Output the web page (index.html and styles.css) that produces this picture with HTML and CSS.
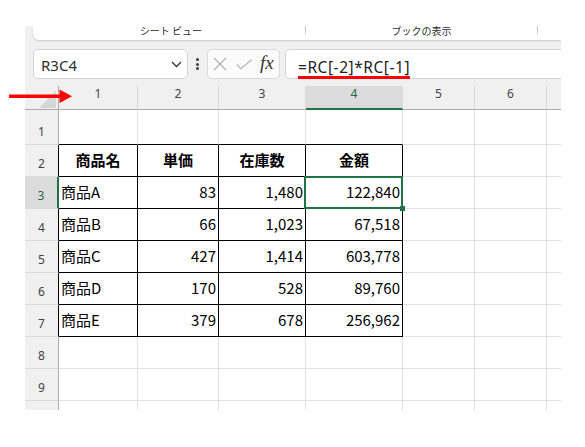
FILE: index.html
```html
<!DOCTYPE html>
<html lang="ja">
<head>
<meta charset="utf-8">
<title>Excel R1C1</title>
<link rel="stylesheet" href="styles.css">
</head>
<body>
<div class="page">
  <div class="window">
    <div class="ribbon">
      <div class="rgroup g1"><span class="rlabel">シート ビュー</span></div>
      <div class="rsep"></div>
      <div class="rgroup g2"><span class="rlabel">ブックの表示</span></div>
      <div class="rsep"></div>
      <div class="rgroup g3"></div>
    </div>
    <div class="fbar">
      <div class="namebox">
        <span class="nametext">R3C4</span>
        <svg class="chev" width="11" height="7" viewBox="0 0 11 7"><polyline points="1,1 5.5,5.5 10,1" fill="none" stroke="#333" stroke-width="1.3"/></svg>
      </div>
      <div class="dots"><i></i><i></i><i></i></div>
      <div class="btnbox">
        <svg class="xicon" width="14" height="14" viewBox="0 0 14 14"><path d="M1 1 L13 13 M13 1 L1 13" stroke="#b3b3b3" stroke-width="1.2" fill="none"/></svg>
        <svg class="chk" width="16" height="11" viewBox="0 0 16 11"><polyline points="0.8,5.5 5,9.8 15.5,0.8" fill="none" stroke="#b3b3b3" stroke-width="1.2"/></svg>
        <span class="fx">fx</span>
      </div>
      <div class="formula"><span class="ftext">=RC[-2]*RC[-1]</span></div>
    </div>
    <div class="sheet">
      <div class="corner"><div class="tri"></div></div>
      <div class="ch">1</div><div class="ch">2</div><div class="ch">3</div><div class="ch chs">4</div><div class="ch">5</div><div class="ch">6</div><div class="ch last"></div>

      <div class="rh">1</div>
      <div class="c tt"></div><div class="c tt"></div><div class="c tt"></div><div class="c tt"></div><div class="c"></div><div class="c"></div><div class="c last"></div>

      <div class="rh rt">2</div>
      <div class="c t hd">商品名</div><div class="c t hd">単価</div><div class="c t hd">在庫数</div><div class="c t hd">金額</div><div class="c"></div><div class="c"></div><div class="c last"></div>

      <div class="rh rhs">3</div>
      <div class="c t">商品A</div><div class="c t num">83</div><div class="c t num">1,480</div><div class="c t num sel">122,840</div><div class="c"></div><div class="c"></div><div class="c last"></div>

      <div class="rh rt">4</div>
      <div class="c t">商品B</div><div class="c t num">66</div><div class="c t num">1,023</div><div class="c t num">67,518</div><div class="c"></div><div class="c"></div><div class="c last"></div>

      <div class="rh rt">5</div>
      <div class="c t">商品C</div><div class="c t num">427</div><div class="c t num">1,414</div><div class="c t num">603,778</div><div class="c"></div><div class="c"></div><div class="c last"></div>

      <div class="rh rt">6</div>
      <div class="c t">商品D</div><div class="c t num">170</div><div class="c t num">528</div><div class="c t num">89,760</div><div class="c"></div><div class="c"></div><div class="c last"></div>

      <div class="rh rt">7</div>
      <div class="c t">商品E</div><div class="c t num">379</div><div class="c t num">678</div><div class="c t num">256,962</div><div class="c"></div><div class="c"></div><div class="c last"></div>

      <div class="rh">8</div>
      <div class="c"></div><div class="c"></div><div class="c"></div><div class="c"></div><div class="c"></div><div class="c"></div><div class="c last"></div>

      <div class="rh">9</div>
      <div class="c"></div><div class="c"></div><div class="c"></div><div class="c"></div><div class="c"></div><div class="c"></div><div class="c last"></div>

      <div class="rh end"></div>
      <div class="c end"></div><div class="c end"></div><div class="c end"></div><div class="c end"></div><div class="c end"></div><div class="c end"></div><div class="c last end"></div>
    </div>
  </div>
  <svg class="arrow" width="80" height="110" viewBox="0 0 80 110">
    <rect x="9" y="94.5" width="52" height="3.5" fill="#ff0000"/>
    <polygon points="59.5,89.5 72,96.3 59.5,103" fill="#ff0000"/>
  </svg>
</div>
</body>
</html>
```
FILE: styles.css
```css
* { box-sizing: border-box; }
html, body { margin: 0; padding: 0; background: #fff; }
body { font-family: "Noto Sans", "Noto Sans CJK JP", sans-serif; color: #000; }

.page {
  position: relative;
  width: 585px;
  height: 447px;
  padding: 26px 0 0 25px;
}

.window {
  width: 536px;
  height: 384px;
  background: #f0f0f0;
  overflow: hidden;
}

/* ribbon */
.ribbon {
  display: flex;
  height: 14px;
  margin-left: 8px;
  margin-right: -12px;
  background: #fff;
  border-radius: 0 0 0 6px;
  box-shadow: 0 1px 2px rgba(0, 0, 0, 0.16);
}
.rgroup { display: flex; justify-content: center; align-items: flex-start; }
.g1 { width: 272px; padding-left: 4px; }
.g2 { width: 231px; }
.g3 { flex: 1; }
.rsep { width: 1px; height: 8px; background: #c6c6c6; }
.rlabel {
  font-family: "Noto Sans CJK JP", sans-serif;
  font-size: 10px;
  line-height: 9px;
  color: #2b2b2b;
  white-space: nowrap;
}

/* formula bar */
.fbar {
  display: flex;
  height: 30px;
  margin: 9px 0 0 8px;
}
.namebox {
  width: 155px;
  background: #fff;
  border: 1px solid #d3d3d3;
  border-radius: 5px;
  display: flex;
  align-items: center;
  justify-content: space-between;
  padding: 1px 5px 0 7px;
}
.nametext {
  font-family: "Noto Sans", sans-serif;
  font-size: 15px;
  line-height: 18px;
  color: #2e2e2e;
}
.chev { display: block; margin-top: -1px; }
.dots {
  width: 19px;
  display: flex;
  flex-direction: column;
  align-items: center;
  justify-content: center;
  gap: 1.5px;
}
.dots i {
  display: block;
  width: 3px;
  height: 3px;
  border-radius: 50%;
  background: #3c3c3c;
}
.btnbox {
  width: 73px;
  background: #fbfbfb;
  border: 1px solid #d9d9d9;
  border-radius: 5px;
  display: flex;
  align-items: center;
  padding-left: 5px;
}
.xicon { display: block; }
.chk { display: block; margin-left: 9px; }
.fx {
  margin-left: 8px;
  font-family: "Liberation Serif", serif;
  font-style: italic;
  font-size: 19px;
  line-height: 20px;
  color: #333;
  margin-top: -2px;
}
.formula {
  flex: 1;
  margin-left: 5px;
  margin-right: -12px;
  background: #fff;
  border: 1px solid #d3d3d3;
  border-radius: 5px;
  padding: 6px 0 0 12px;
}
.ftext {
  display: inline-block;
  font-family: "Noto Sans", sans-serif;
  font-size: 15.5px;
  line-height: 18px;
  letter-spacing: 0.55px;
  color: #222;
  border-bottom: 3px solid #ff0000;
}

/* sheet */
.sheet {
  margin-top: 7px;
  display: grid;
  grid-template-columns: 34px 79px 81px 87px 97px 72px 72px 1fr;
  grid-template-rows: 24px 35px repeat(8, 32px) 9px;
}
.corner {
  background: #f0f0f0;
  border-right: 1px solid #ababab;
  border-bottom: 1px solid #ababab;
  display: flex;
  justify-content: flex-end;
  align-items: flex-end;
  padding: 0 2px 1px 0;
}
.tri {
  width: 17px;
  height: 17px;
  background: #d6d6d6;
  clip-path: polygon(100% 0, 100% 100%, 0 100%);
}
.ch {
  background: #f0f0f0;
  border-right: 1px solid #d9d9d9;
  border-bottom: 1px solid #ababab;
  text-align: center;
  font-family: "Noto Sans", sans-serif;
  font-size: 12px;
  line-height: 16px;
  color: #444;
}
.ch.last { border-right: none; }
.chs {
  background: #dcdcdc;
  color: #1d6b3f;
  border-bottom: 2px solid #217346;
}
.rh {
  background: #f0f0f0;
  border-right: 1px solid #ababab;
  border-bottom: 1px solid #d9d9d9;
  display: flex;
  align-items: flex-end;
  justify-content: center;
  padding-bottom: 4px;
  font-family: "Noto Sans", sans-serif;
  font-size: 12px;
  line-height: 16px;
  color: #444;
}
.rt { border-right-color: #000; }
.rhs {
  background: #dcdcdc;
  color: #1d6b3f;
  border-right: 2px solid #217346;
}
.rh.end, .c.end { border-bottom: none; }

.c {
  background: #fff;
  border-right: 1px solid #e1e1e1;
  border-bottom: 1px solid #e1e1e1;
  display: flex;
  align-items: center;
  padding: 0 2px 1px 2px;
  font-family: "Noto Sans CJK JP", sans-serif;
  font-size: 15px;
  line-height: 20px;
  color: #000;
  white-space: nowrap;
}
.c.last { border-right: none; }
.tt { border-bottom-color: #000; }
.t { border-right-color: #000; border-bottom-color: #000; }
.num { justify-content: flex-end; }
.hd { justify-content: center; font-weight: bold; }

.sel { position: relative; }
.sel::after {
  content: "";
  position: absolute;
  top: -1px;
  left: -2px;
  right: -1px;
  bottom: -1px;
  border: 2px solid #217346;
}
.sel::before {
  content: "";
  position: absolute;
  right: -3px;
  bottom: -3px;
  width: 5px;
  height: 5px;
  background: #217346;
  z-index: 2;
}

.arrow {
  position: absolute;
  left: 0;
  top: 0;
}
```
